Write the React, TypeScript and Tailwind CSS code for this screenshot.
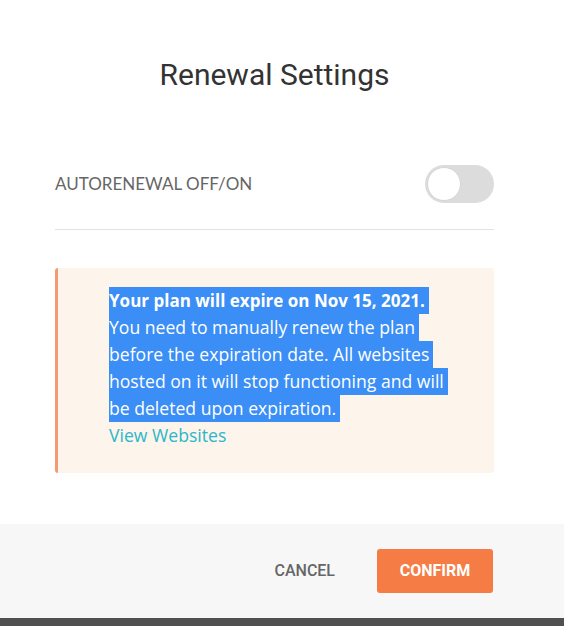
export default function App() {
  const lines = [
    { t: "Your plan will expire on Nov 15, 2021.", bold: true },
    { t: "You need to manually renew the plan", bold: false },
    { t: "before the expiration date. All websites", bold: false },
    { t: "hosted on it will stop functioning and will", bold: false },
    { t: "be deleted upon expiration.", bold: false },
  ];
  return (
    <div className="w-[564px] h-[626px] bg-white flex flex-col">
      <div className="flex-1 pl-[55px] pr-[70px]">
        <h1
          className="mt-[56px] text-center text-[30px] leading-[38px] text-[#333333]"
          style={{ fontFamily: "Roboto, sans-serif" }}
        >
          Renewal Settings
        </h1>
        <div className="mt-[71px] h-[38px] flex items-center justify-between">
          <span
            className="text-[17px] text-[#666666]"
            style={{ fontFamily: "Lato, sans-serif" }}
          >
            AUTORENEWAL OFF/ON
          </span>
          <div className="w-[69px] h-[38px] rounded-full bg-[#dcdcdc] flex items-center pl-[2px]">
            <div className="w-[34px] h-[34px] rounded-full bg-white border border-[#d6d6d6]" />
          </div>
        </div>
        <div className="mt-[26px] h-px bg-[#e2e2e2]" />
        <div
          className="mt-[38px] h-[205px] bg-[#fdf4eb] border-l-[3px] border-[#f39a72] rounded-[3px] pl-[51px] pt-[19px]"
          style={{ fontFamily: "'Open Sans', sans-serif" }}
        >
          {lines.map((l, i) => (
            <div
              key={i}
              className={
                "w-fit pr-[4px] bg-[#3a8ef6] text-white leading-[27px] whitespace-nowrap " +
                (l.bold ? "font-bold text-[17px]" : "font-normal text-[17.6px]")
              }
            >
              {l.t}
            </div>
          ))}
          <div className="text-[17.6px] leading-[27px] text-[#2bb7c9]">View Websites</div>
        </div>
      </div>
      <div
        className="h-[94px] bg-[#f7f7f7] flex items-center justify-end pr-[71px]"
        style={{ fontFamily: "Roboto, sans-serif" }}
      >
        <span className="text-[16px] font-medium text-[#666666] mr-[42px]">CANCEL</span>
        <div className="w-[116px] h-[44px] bg-[#f67c45] rounded-[3px] flex items-center justify-center text-white text-[16px] font-bold">
          CONFIRM
        </div>
      </div>
      <div className="h-[8px] bg-[#505050]" />
    </div>
  );
}
